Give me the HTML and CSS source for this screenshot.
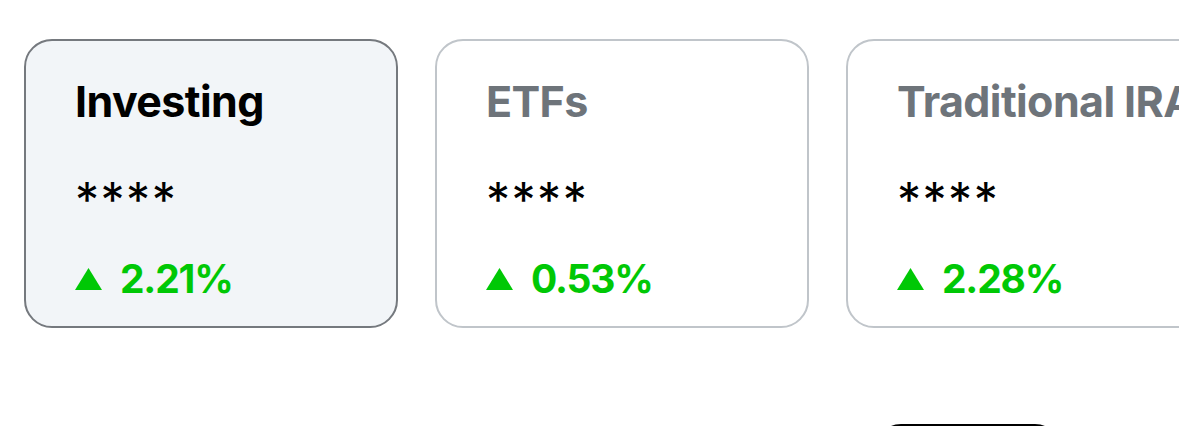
FILE: index.html
```html
<!DOCTYPE html>
<html lang="en">
<head>
<meta charset="utf-8">
<title>Accounts</title>
<link rel="stylesheet" href="styles.css">
</head>
<body>
<div class="page">
  <div class="cards">
    <div class="card card-active">
      <div class="card-title">Investing</div>
      <div class="card-value">****</div>
      <div class="card-change"><svg class="tri" viewBox="0 0 27 22"><polygon points="13.5,0 27,22 0,22" fill="#00c805"/></svg><span>2.21%</span></div>
    </div>
    <div class="card">
      <div class="card-title">ETFs</div>
      <div class="card-value">****</div>
      <div class="card-change"><svg class="tri" viewBox="0 0 27 22"><polygon points="13.5,0 27,22 0,22" fill="#00c805"/></svg><span>0.53%</span></div>
    </div>
    <div class="card">
      <div class="card-title">Traditional IRA</div>
      <div class="card-value">****</div>
      <div class="card-change"><svg class="tri" viewBox="0 0 27 22"><polygon points="13.5,0 27,22 0,22" fill="#00c805"/></svg><span>2.28%</span></div>
    </div>
  </div>
  <div class="actions">
    <div class="pill"></div>
  </div>
</div>
</body>
</html>
```
FILE: styles.css
```css
html, body {
  margin: 0;
  padding: 0;
  background: #ffffff;
  overflow: hidden;
}
body {
  font-family: Inter, "Noto Sans", sans-serif;
  color: #000;
}
.page {
  width: 1179px;
  overflow: hidden;
}
.cards {
  display: flex;
  gap: 37px;
  padding: 39px 0 0 24px;
  width: max-content;
}
.card {
  box-sizing: border-box;
  width: 374px;
  height: 289px;
  border: 2px solid #c0c5ca;
  border-radius: 28px;
  background: #ffffff;
  padding: 0 0 0 49px;
  display: flex;
  flex-direction: column;
}
.card-active {
  border-color: #75797e;
  background: #f2f5f8;
}
.card-title {
  margin-top: 32px;
  font-size: 43px;
  font-weight: 650;
  line-height: 56px;
  color: #6e747a;
  letter-spacing: -0.6px;
  white-space: nowrap;
}
.card-active .card-title {
  color: #000;
}
.card-value {
  margin-top: 46px;
  font-size: 48px;
  line-height: 50px;
  letter-spacing: 1.5px;
  font-weight: 400;
}
.card-change {
  margin-top: 30px;
  display: flex;
  align-items: center;
  gap: 18px;
  color: #00c805;
  font-size: 39px;
  font-weight: 650;
  line-height: 48px;
  letter-spacing: -1.2px;
}
.tri {
  width: 27px;
  height: 22px;
}
.actions {
  padding: 96px 0 0 873px;
}
.pill {
  width: 190px;
  height: 56px;
  border-radius: 28px;
  background: #000;
}
```
